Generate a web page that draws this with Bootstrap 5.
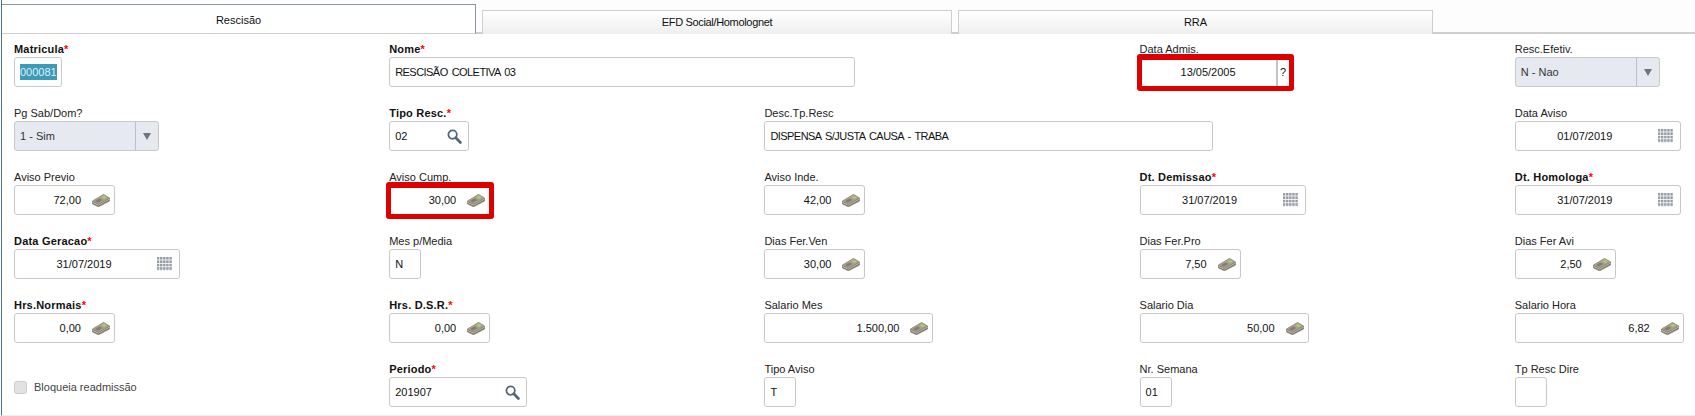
<!doctype html>
<html lang="pt-BR">

<head>
    <meta charset="utf-8" />
    <meta name="viewport" content="width=device-width, initial-scale=1" />
    <title>Rescisão</title>
    <link href="https://cdn.jsdelivr.net/npm/bootstrap@5.3.0/dist/css/bootstrap.min.css" rel="stylesheet" />
    <style>
        body {
            background-color: #fff;
            color: #222;
            font-family: "Liberation Sans", Arial, sans-serif;
            font-size: 11px;
            height: 416px;
            overflow: hidden;
        }

        .tela {
            height: 416px;
            margin-left: 1px;
            border-left: 1px solid #4f6f8f;
            border-bottom: 1px solid #eee;
        }

        .abas {
            height: 34px;
            padding-top: 4px;
            align-items: flex-end;
            border-bottom: 2px solid #cfcfcf;
            background-color: #fdfdfd;
        }

        .aba {
            height: 24px;
            margin-right: 6px;
            display: flex;
            align-items: center;
            justify-content: center;
            color: #111;
            border: 1px solid #cfcfcf;
            border-bottom: 0;
            background: linear-gradient(#fff, #efefef);
            margin-bottom: -2px;
        }

        .aba-ativa {
            width: 474px;
            height: 30px;
            padding-top: 2px;
            background: #fff;
            border-color: #8a97a3;
            border-left: 0;
            border-bottom: 1px solid #cfcfcf;
        }

        .aba-2 { width: 470px; letter-spacing: -.33px; }
        .aba-3 { width: 475px; }

        .grade {
            display: grid;
            grid-template-columns: repeat(4, 375.2px) 1fr;
            row-gap: 18px;
            padding: 7px 0 0 12px;
        }

        .duas-col { grid-column: span 2; }

        .rotulo {
            display: block;
            height: 16px;
            line-height: 16px;
            margin: 0;
            color: #222;
        }

        .rotulo-forte {
            font-weight: 700;
            color: #111;
            letter-spacing: .2px;
        }

        .rotulo-forte i {
            color: #f00;
            font-style: normal;
            letter-spacing: 0;
        }

        .caixa {
            position: relative;
            display: flex;
            align-items: center;
            height: 30px;
            padding: 0;
            font-size: 11px;
            line-height: 1;
            color: #111;
            background-color: #fff;
            border: 1px solid #c8c8c8;
            border-radius: 3px;
        }

        .valor {
            flex-grow: 1;
            min-width: 0;
            padding: 0 5px;
            white-space: nowrap;
        }

        .num { text-align: right; padding-right: 0; }
        .data { text-align: center; padding: 0; }
        .maiusculo { letter-spacing: -.55px; word-spacing: 1.5px; }

        .selecionado {
            background-color: #3d9ab8;
            color: #dff1f6;
            padding: 2px 0;
        }

        .combo {
            background-color: #e6e9f0;
            color: #333;
        }

        .seta {
            flex: 0 0 23px;
            height: 100%;
            display: flex;
            align-items: center;
            justify-content: center;
            border-left: 1px solid #bcbfc4;
        }

        .seta span {
            width: 0;
            height: 0;
            border-left: 4px solid transparent;
            border-right: 4px solid transparent;
            border-top: 7px solid #6d7580;
        }

        .ajuda {
            flex: 0 0 13px;
            height: 100%;
            display: flex;
            align-items: center;
            justify-content: center;
            border-left: 2px solid #c4c4c4;
        }

        .ic-dinheiro { flex: 0 0 18px; margin: 0 4px 0 11px; }
        .ic-busca { flex: 0 0 15px; margin: 0 6px 0 4px; }
        .ic-data { flex: 0 0 15px; margin: 0 7px 0 4px; }

        .destaque::after {
            content: "";
            position: absolute;
            top: -4px;
            left: -4px;
            right: -5px;
            bottom: -5px;
            border: 5px solid #dc0000;
            border-top-width: 6px;
            border-radius: 3px;
        }

        .l-32 { width: 32px; }
        .l-48 { width: 48px; }
        .l-80 { width: 80px; }
        .l-100 { width: 101px; }
        .l-145 { width: 145px; }
        .l-150 { width: 150px; }
        .l-138 { width: 138px; }
        .l-166 { width: 166px; }
        .l-169 { width: 169px; }
        .l-449 { width: 449px; }
        .l-466 { width: 466px; }

        .marca {
            height: 30px;
            padding-bottom: 9px;
            color: #444;
        }

        .form-check-input.marca-caixa:disabled {
            width: 13px;
            height: 13px;
            margin: 0 7px 0 0;
            background-color: #e2e2e2;
            border: 1px solid #ccc;
            opacity: 1;
        }
    </style>
</head>

<body>
    <svg width="0" height="0" class="position-absolute">
        <symbol id="dinheiro" viewBox="0 0 18 13">
            <path d="M.5 7 11.5.5 17.6 4v3L6.5 12.8.5 10z" fill="#7b7468" stroke="#8b8478" stroke-width=".8" stroke-linejoin="round" />
            <polygon points=".5,7 11.5,.5 17.6,4 6.5,10" fill="#a79f91" />
            <polygon points=".8,8 6.5,10.8 17.4,4.8 17.4,5.6 6.5,11.6 .8,8.9" fill="#d2cdc3" />
            <polygon points="9.4,3.2 12,1.7 15,3.5 12.2,5" fill="#a6d06c" />
            <polygon points="3,7 7.4,4.4 10.4,6 6,8.6" fill="#857c6e" />
        </symbol>
        <symbol id="busca" viewBox="0 0 15 15">
            <circle cx="5.6" cy="5.6" r="4.2" fill="#fff" stroke="#55667a" stroke-width="1.8" />
            <line x1="8.8" y1="8.8" x2="13.4" y2="13.4" stroke="#55667a" stroke-width="2.8" stroke-linecap="round" />
        </symbol>
        <symbol id="calendario" viewBox="0 0 15 14">
            <defs>
                <pattern id="celulas" width="3.1" height="3.4" patternUnits="userSpaceOnUse">
                    <rect width="2.4" height="2.6" fill="#979ea8" />
                </pattern>
            </defs>
            <rect width="15" height="13.4" fill="url(#celulas)" />
        </symbol>
    </svg>

    <div class="tela">
        <ul class="nav abas">
            <li class="nav-item aba aba-ativa">Rescisão</li>
            <li class="nav-item aba aba-2">EFD Social/Homolognet</li>
            <li class="nav-item aba aba-3">RRA</li>
        </ul>

        <form class="grade">
            <!-- linha 1 -->
            <div>
                <label class="rotulo rotulo-forte">Matricula<i>*</i></label>
                <div class="caixa l-48"><div class="valor"><span class="selecionado">000081</span></div></div>
            </div>
            <div class="duas-col">
                <label class="rotulo rotulo-forte">Nome<i>*</i></label>
                <div class="caixa l-466"><div class="valor maiusculo">RESCISÃO COLETIVA 03</div></div>
            </div>
            <div>
                <label class="rotulo">Data Admis.</label>
                <div class="caixa l-150 destaque"><div class="valor data">13/05/2005</div><div class="ajuda">?</div></div>
            </div>
            <div>
                <label class="rotulo">Resc.Efetiv.</label>
                <div class="caixa combo l-145"><div class="valor">N - Nao</div><div class="seta"><span></span></div></div>
            </div>

            <!-- linha 2 -->
            <div>
                <label class="rotulo">Pg Sab/Dom?</label>
                <div class="caixa combo l-145"><div class="valor">1 - Sim</div><div class="seta"><span></span></div></div>
            </div>
            <div>
                <label class="rotulo rotulo-forte">Tipo Resc.<i>*</i></label>
                <div class="caixa l-80"><div class="valor">02</div><svg class="ic-busca" width="15" height="15"><use href="#busca" /></svg></div>
            </div>
            <div class="duas-col">
                <label class="rotulo">Desc.Tp.Resc</label>
                <div class="caixa l-449"><div class="valor maiusculo">DISPENSA S/JUSTA CAUSA - TRABA</div></div>
            </div>
            <div>
                <label class="rotulo">Data Aviso</label>
                <div class="caixa l-166"><div class="valor data">01/07/2019</div><svg class="ic-data" width="15" height="14"><use href="#calendario" /></svg></div>
            </div>

            <!-- linha 3 -->
            <div>
                <label class="rotulo">Aviso Previo</label>
                <div class="caixa l-100"><div class="valor num">72,00</div><svg class="ic-dinheiro" width="18" height="13"><use href="#dinheiro" /></svg></div>
            </div>
            <div>
                <label class="rotulo">Aviso Cump.</label>
                <div class="caixa l-100 destaque"><div class="valor num">30,00</div><svg class="ic-dinheiro" width="18" height="13"><use href="#dinheiro" /></svg></div>
            </div>
            <div>
                <label class="rotulo">Aviso Inde.</label>
                <div class="caixa l-100"><div class="valor num">42,00</div><svg class="ic-dinheiro" width="18" height="13"><use href="#dinheiro" /></svg></div>
            </div>
            <div>
                <label class="rotulo rotulo-forte">Dt. Demissao<i>*</i></label>
                <div class="caixa l-166"><div class="valor data">31/07/2019</div><svg class="ic-data" width="15" height="14"><use href="#calendario" /></svg></div>
            </div>
            <div>
                <label class="rotulo rotulo-forte">Dt. Homologa<i>*</i></label>
                <div class="caixa l-166"><div class="valor data">31/07/2019</div><svg class="ic-data" width="15" height="14"><use href="#calendario" /></svg></div>
            </div>

            <!-- linha 4 -->
            <div>
                <label class="rotulo rotulo-forte">Data Geracao<i>*</i></label>
                <div class="caixa l-166"><div class="valor data">31/07/2019</div><svg class="ic-data" width="15" height="14"><use href="#calendario" /></svg></div>
            </div>
            <div>
                <label class="rotulo">Mes p/Media</label>
                <div class="caixa l-32"><div class="valor">N</div></div>
            </div>
            <div>
                <label class="rotulo">Dias Fer.Ven</label>
                <div class="caixa l-100"><div class="valor num">30,00</div><svg class="ic-dinheiro" width="18" height="13"><use href="#dinheiro" /></svg></div>
            </div>
            <div>
                <label class="rotulo">Dias Fer.Pro</label>
                <div class="caixa l-100"><div class="valor num">7,50</div><svg class="ic-dinheiro" width="18" height="13"><use href="#dinheiro" /></svg></div>
            </div>
            <div>
                <label class="rotulo">Dias Fer Avi</label>
                <div class="caixa l-100"><div class="valor num">2,50</div><svg class="ic-dinheiro" width="18" height="13"><use href="#dinheiro" /></svg></div>
            </div>

            <!-- linha 5 -->
            <div>
                <label class="rotulo rotulo-forte">Hrs.Normais<i>*</i></label>
                <div class="caixa l-100"><div class="valor num">0,00</div><svg class="ic-dinheiro" width="18" height="13"><use href="#dinheiro" /></svg></div>
            </div>
            <div>
                <label class="rotulo rotulo-forte">Hrs. D.S.R.<i>*</i></label>
                <div class="caixa l-100"><div class="valor num">0,00</div><svg class="ic-dinheiro" width="18" height="13"><use href="#dinheiro" /></svg></div>
            </div>
            <div>
                <label class="rotulo">Salario Mes</label>
                <div class="caixa l-169"><div class="valor num">1.500,00</div><svg class="ic-dinheiro" width="18" height="13"><use href="#dinheiro" /></svg></div>
            </div>
            <div>
                <label class="rotulo">Salario Dia</label>
                <div class="caixa l-169"><div class="valor num">50,00</div><svg class="ic-dinheiro" width="18" height="13"><use href="#dinheiro" /></svg></div>
            </div>
            <div>
                <label class="rotulo">Salario Hora</label>
                <div class="caixa l-169"><div class="valor num">6,82</div><svg class="ic-dinheiro" width="18" height="13"><use href="#dinheiro" /></svg></div>
            </div>

            <!-- linha 6 -->
            <div class="d-flex align-items-end">
                <div class="marca d-flex align-items-center">
                    <input class="form-check-input marca-caixa" type="checkbox" disabled />
                    <span>Bloqueia readmissão</span>
                </div>
            </div>
            <div>
                <label class="rotulo rotulo-forte">Periodo<i>*</i></label>
                <div class="caixa l-138"><div class="valor">201907</div><svg class="ic-busca" width="15" height="15"><use href="#busca" /></svg></div>
            </div>
            <div>
                <label class="rotulo">Tipo Aviso</label>
                <div class="caixa l-32"><div class="valor">T</div></div>
            </div>
            <div>
                <label class="rotulo">Nr. Semana</label>
                <div class="caixa l-32"><div class="valor">01</div></div>
            </div>
            <div>
                <label class="rotulo">Tp Resc Dire</label>
                <div class="caixa l-32"></div>
            </div>
        </form>
    </div>

    <script src="https://cdn.jsdelivr.net/npm/bootstrap@5.3.0/dist/js/bootstrap.bundle.min.js"></script>
</body>

</html>
